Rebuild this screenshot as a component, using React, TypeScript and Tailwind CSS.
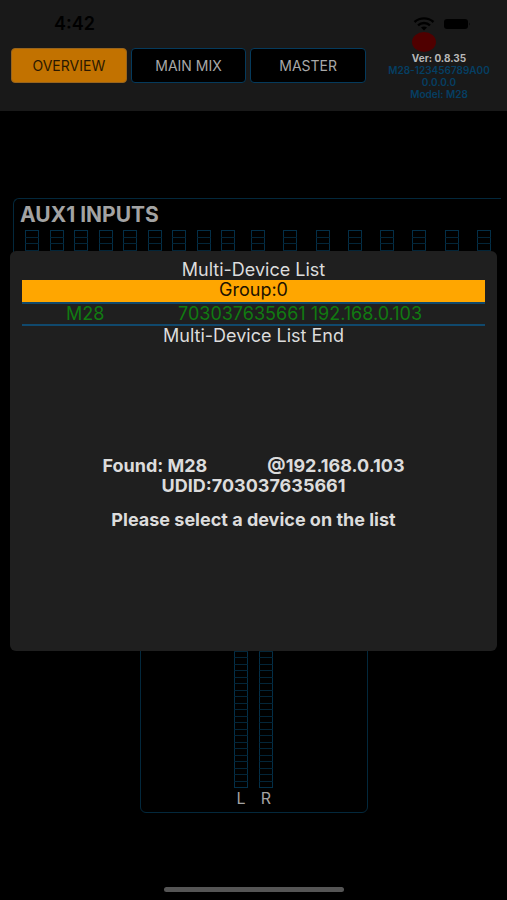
import React from "react";

const tabs = ["OVERVIEW", "MAIN MIX", "MASTER"];

function Meter({ segments }: { segments: number }) {
  const height = segments * 6.5;
  return (
    <svg
      width="14"
      height={height + 1}
      className="block shrink-0"
      fill="none"
      stroke="#032f48"
      aria-hidden="true"
    >
      <rect x="0.5" y="0.5" width="13" height={height} />
      {Array.from({ length: segments - 1 }, (_, i) => (
        <path key={i} d={`M0 ${Math.round((i + 1) * 6.5) + 0.5}H14`} stroke="#032538" />
      ))}
    </svg>
  );
}

function StatusBar() {
  return (
    <div className="flex justify-between items-center h-12 pl-[54px] pr-9">
      <span className="text-lg leading-6 font-semibold text-black">4:42</span>
      <div className="flex items-center gap-2">
        <svg
          width="22"
          height="14"
          viewBox="0 0 22 14"
          fill="none"
          stroke="#000"
          strokeWidth="2.4"
          aria-label="Wi-Fi"
        >
          <path d="M1.5 5C7 .2 15 .2 20.500 5" />
          <path d="M5 8.300C8.500 5.200 13.500 5.200 17 8.300" />
          <path d="M8 10.500C9.700 9 12.300 9 14 10.500L11 13.500Z" fill="#000" stroke="none" />
        </svg>
        <svg width="28" height="12" viewBox="0 0 28 12" aria-label="Battery">
          <rect x="1" y="1" width="24" height="10" rx="3" fill="#000" />
          <path d="M26 4.500Q27.500 6 26 7.500Z" fill="#000" />
        </svg>
      </div>
    </div>
  );
}

function DeviceInfo() {
  return (
    <div className="relative w-[116px] shrink-0 pt-1 text-center text-[10px] leading-3 font-semibold text-[#053f63]">
      <span className="absolute left-[31px] -top-4 h-5 w-6 rounded-[50%] bg-[#500000]" />
      <p className="font-bold text-[#b8b8b8]">Ver: 0.8.35</p>
      <p className="whitespace-nowrap">M28-123456789A00</p>
      <p>0.0.0.0</p>
      <p>Model: M28</p>
    </div>
  );
}

function DeviceDialog() {
  return (
    <div
      role="dialog"
      aria-label="Multi-Device List"
      className="absolute inset-x-[10px] top-[140px] min-h-[400px] rounded-md bg-[#1f1f1f] px-3 pt-[9px] text-center text-lg leading-5 text-[#dcdcdc]"
    >
      <h2 className="leading-5">Multi-Device List</h2>
      <p className="h-[22px] bg-[#ffa600] text-[#1c1200]">Group:0</p>
      <button
        type="button"
        className="flex w-full border-y-2 border-[#10496d] pl-11 text-[#117a11]"
      >
        <span className="w-28 text-left">M28</span>
        <span className="whitespace-nowrap">703037635661 192.168.0.103</span>
      </button>
      <p>Multi-Device List End</p>

      <div className="mt-[110px] text-lg leading-5 font-bold">
        <p className="flex justify-center gap-[60px]">
          <span>Found: M28</span>
          <span>@192.168.0.103</span>
        </p>
        <p>UDID:703037635661</p>
        <p className="mt-[14px]">Please select a device on the list</p>
      </div>
    </div>
  );
}

export default function App() {
  return (
    <div className="flex min-h-screen flex-col overflow-hidden bg-black font-[Inter,'Liberation_Sans',sans-serif]">
      <header className="bg-[#191919] pb-[11px]">
        <StatusBar />
        <div className="flex gap-[15px] pl-[11px] pr-[10px]">
          <nav className="grid h-[35px] flex-1 grid-cols-3 gap-1">
            {tabs.map((tab, i) => (
              <button
                key={tab}
                type="button"
                className={
                  i === 0
                    ? "rounded border border-[#98641c] bg-[#c27200] text-sm text-[#2a1800]"
                    : "rounded border border-[#053a5c] bg-black text-sm text-[#a8a8a8]"
                }
              >
                {tab}
              </button>
            ))}
          </nav>
          <DeviceInfo />
        </div>
      </header>

      <main className="relative flex-1 pt-[87px]">
        <section className="ml-[13px] mr-[6px] h-[240px] rounded-tl-md border-l border-t border-[#03283c] pr-[10px]">
          <h1 className="pl-[6px] pt-1 text-[21px] leading-6 font-bold text-[#a3a3a3]">
            AUX1 INPUTS
          </h1>
          <div className="mt-[3px] flex gap-4 pl-[11px]">
            <div className="flex w-[210px] justify-between">
              {Array.from({ length: 9 }, (_, i) => (
                <Meter key={i} segments={20} />
              ))}
            </div>
            <div className="flex flex-1 justify-between">
              {Array.from({ length: 8 }, (_, i) => (
                <Meter key={i} segments={20} />
              ))}
            </div>
          </div>
        </section>

        <section className="mx-auto mt-[60px] flex h-[315px] w-[228px] items-end justify-center gap-[11px] rounded-md border border-[#03283c] pb-1">
          {["L", "R"].map((channel) => (
            <div key={channel} className="flex w-[14px] flex-col items-center">
              <Meter segments={40} />
              <span className="text-base leading-5 text-[#a3a3a3]">{channel}</span>
            </div>
          ))}
        </section>

        <DeviceDialog />
      </main>

      <footer className="flex justify-center pb-2">
        <div className="h-[5px] w-[180px] rounded-full bg-[#555555]" />
      </footer>
    </div>
  );
}
